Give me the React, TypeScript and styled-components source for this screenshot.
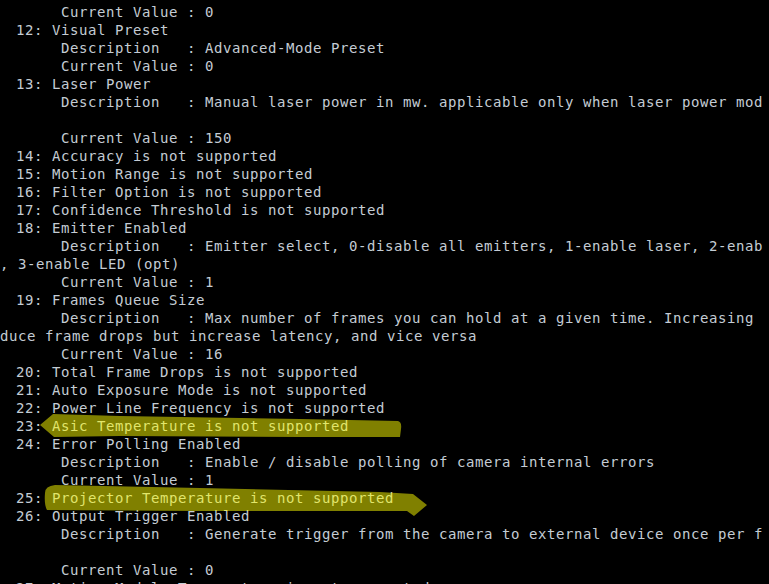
import React from "react";
import styled, { createGlobalStyle } from "styled-components";

const GlobalStyle = createGlobalStyle`
  html, body {
    margin: 0;
    padding: 0;
    background: #000000;
  }
  #root {
    width: 769px;
    height: 584px;
    overflow: hidden;
  }
`;

const COL = 9.0;

const Terminal = styled.div`
  position: relative;
  width: 769px;
  height: 584px;
  overflow: hidden;
  box-sizing: border-box;
  padding-top: 3px;
  background: #000000;
  color: #c4ccd4;
  font-family: "DejaVu Sans Mono", "Liberation Mono", monospace;
  font-size: 14px;
  letter-spacing: 0.57px;
`;

const Line = styled.div<{ $indent: number }>`
  height: 18px;
  line-height: 18px;
  white-space: pre;
  overflow: hidden;
  padding-left: ${(p) => (p.$indent > 0 ? p.$indent * COL - 2 : 0)}px;
`;

const Marks = styled.svg`
  position: absolute;
  left: 0;
  top: 0;
  width: 769px;
  height: 584px;
  pointer-events: none;
`;

const Stroke = styled.path`
  fill: rgba(255, 255, 0, 0.5);
`;

const lines: string[] = [
  "       Current Value : 0",
  "  12: Visual Preset",
  "       Description   : Advanced-Mode Preset",
  "       Current Value : 0",
  "  13: Laser Power",
  "       Description   : Manual laser power in mw. applicable only when laser power mod",
  "",
  "       Current Value : 150",
  "  14: Accuracy is not supported",
  "  15: Motion Range is not supported",
  "  16: Filter Option is not supported",
  "  17: Confidence Threshold is not supported",
  "  18: Emitter Enabled",
  "       Description   : Emitter select, 0-disable all emitters, 1-enable laser, 2-enab",
  ", 3-enable LED (opt)",
  "       Current Value : 1",
  "  19: Frames Queue Size",
  "       Description   : Max number of frames you can hold at a given time. Increasing",
  "duce frame drops but increase latency, and vice versa",
  "       Current Value : 16",
  "  20: Total Frame Drops is not supported",
  "  21: Auto Exposure Mode is not supported",
  "  22: Power Line Frequency is not supported",
  "  23: Asic Temperature is not supported",
  "  24: Error Polling Enabled",
  "       Description   : Enable / disable polling of camera internal errors",
  "       Current Value : 1",
  "  25: Projector Temperature is not supported",
  "  26: Output Trigger Enabled",
  "       Description   : Generate trigger from the camera to external device once per f",
  "",
  "       Current Value : 0",
  "  27: Motion Module Temperature is not supported",
];

const rows = lines.map((raw) => {
  const text = raw.replace(/^ +/, "");
  return { indent: raw.length - text.length, text };
});

export default function App() {
  return (
    <>
      <GlobalStyle />
      <Terminal>
        {rows.map((r, i) => (
          <Line key={i} $indent={r.indent}>
            {r.text}
          </Line>
        ))}
        <Marks viewBox="0 0 769 584">
          <Stroke d="M40,425 L53,414 L120,416 L300,419 L398,421 Q402,422 401,429 L400,437 L300,437 L120,436 L54,437 Z" />
          <Stroke d="M45,493 Q45,486 55,485 L200,488 L380,492 L413,494 L427,505 L414,516 L407,511 L200,511 L47,510 Q44,505 45,493 Z" />
        </Marks>
      </Terminal>
    </>
  );
}
